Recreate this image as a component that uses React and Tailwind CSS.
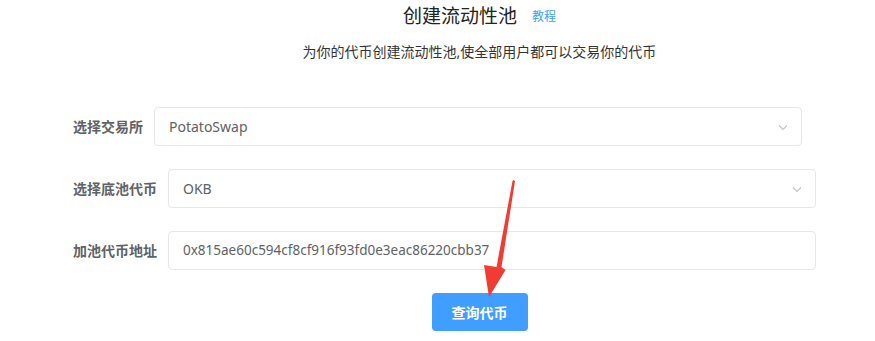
import React from "react";

const font = { fontFamily: '"Noto Sans", "Noto Sans CJK SC", sans-serif' };

function Chevron() {
  return (
    <svg width="14" height="14" viewBox="0 0 14 14" className="shrink-0">
      <path d="M3 5.5 L7 9.5 L11 5.5" fill="none" stroke="#c0c4cc" strokeWidth="1.1" />
    </svg>
  );
}

function Row({ label, value, select, small }) {
  return (
    <div className="flex items-center">
      <div className="pr-[11px] text-[14px] font-bold text-[#606266] whitespace-nowrap">{label}</div>
      <div className="w-[648px] h-[39px] border border-[#e4e7ed] rounded-[4px] bg-white flex items-center justify-between pl-[14px] pr-[11px]">
        <span className={small ? "text-[13.5px] text-[#606266]" : "text-[14px] text-[#606266]"}>{value}</span>
        {select && <Chevron />}
      </div>
    </div>
  );
}

export default function App() {
  return (
    <div className="relative w-[875px] h-[341px] bg-white overflow-hidden" style={font}>
      <div className="pl-[84px] flex flex-col items-center">
        <div className="flex items-center h-[33px]">
          <span className="text-[19px] text-[#222] leading-none">创建流动性池</span>
          <span className="ml-[15px] mt-[1px] text-[12px] text-[#409eff] leading-none whitespace-nowrap">教程</span>
        </div>
        <div className="mt-[12px] text-[14px] text-[#333] leading-none">为你的代币创建流动性池,使全部用户都可以交易你的代币</div>
      </div>
      <div className="pl-[73px] mt-[48px] flex flex-col gap-[23px]">
        <Row label="选择交易所" value="PotatoSwap" select />
        <Row label="选择底池代币" value="OKB" select />
        <Row label="加池代币地址" value="0x815ae60c594cf8cf916f93fd0e3eac86220cbb37" small />
      </div>
      <div className="pl-[84px] mt-[23px] flex justify-center">
        <button className="w-[96px] h-[38px] rounded-[4px] bg-[#409eff] text-white text-[14px] font-bold">查询代币</button>
      </div>
      <svg className="absolute inset-0 pointer-events-none" width="875" height="341">
        <polygon
          points="513.5,180 515,181 501.5,267 505.5,270 489,297 484,265 496.5,267 512.5,181"
          fill="#f23c33"
        />
      </svg>
    </div>
  );
}
